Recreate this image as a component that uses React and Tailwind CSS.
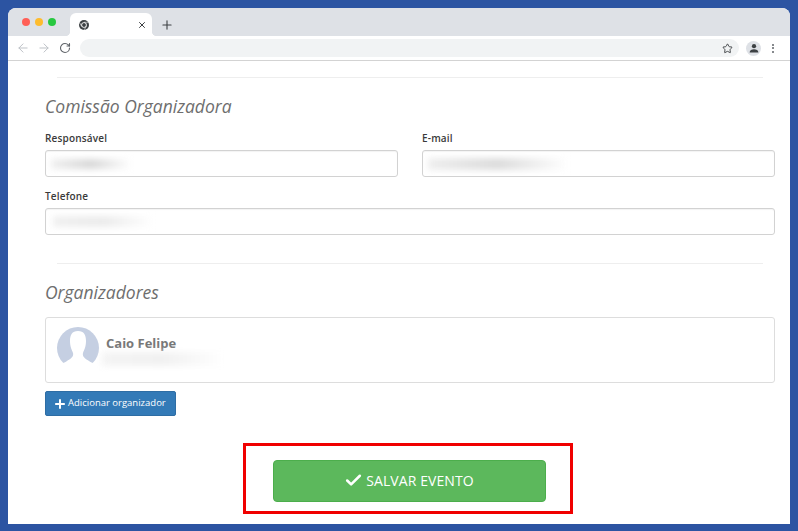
import React from "react";
import { ArrowLeft, ArrowRight, RotateCw, X, Plus, Star, Check } from "lucide-react";

const font = "font-['Open_Sans',sans-serif]";

// Smudged out personal data in the form
const Blur = ({ className }) => (
  <div className={`blur-[3px] bg-linear-to-r ${className}`}></div>
);

const Field = ({ label, blurClass, className = "" }) => (
  <div className={`flex flex-col ${className}`}>
    <label className="h-[23px] text-[10px] leading-[22px] font-semibold tracking-[0.17px] text-[#3a3a3a]">{label}</label>
    <div className="h-[27px] rounded-[3px] border border-[#d2d2d2] bg-white flex items-center pl-[5px] shadow-[inset_0_1px_1px_rgba(0,0,0,0.05)]">
      <Blur className={blurClass} />
    </div>
  </div>
);

const Divider = () => <hr className="mx-3 border-0 border-t border-[#eee]" />;

const ChromeLogo = () => (
  <svg viewBox="0 0 16 16" className="w-[10px] h-[10px]">
    <circle cx="8" cy="8" r="8" fill="#3c4043" />
    <circle cx="8" cy="8" r="4.4" fill="#fff" />
    <circle cx="8" cy="8" r="3.1" fill="#3c4043" />
    <path d="M8 3.6h7M4.2 10.2 0.9 4.2M11.8 10.2 8 16" stroke="#fff" strokeWidth="0.9" fill="none" />
  </svg>
);

const BrowserBar = () => (
  <div className="shrink-0">
    <div className="h-[28px] bg-[#dee1e6] flex pt-[5px]">
      <div className="flex items-center gap-[5px] pl-[14px] w-[62px] h-[18px]">
        <span className="w-[8px] h-[8px] rounded-full bg-[#ff5f57]"></span>
        <span className="w-[8px] h-[8px] rounded-full bg-[#febc2e]"></span>
        <span className="w-[8px] h-[8px] rounded-full bg-[#28c840]"></span>
      </div>
      <div className="relative w-[82px] h-[23px] bg-white rounded-t-[6px] flex items-center justify-between pl-[9px] pr-[5px]">
        <span className="absolute -left-[5px] bottom-0 w-[5px] h-[5px] bg-[radial-gradient(circle_at_0_0,#dee1e6_5px,#fff_5.5px)]"></span>
        <span className="absolute -right-[5px] bottom-0 w-[5px] h-[5px] bg-[radial-gradient(circle_at_100%_0,#dee1e6_5px,#fff_5.5px)]"></span>
        <ChromeLogo />
        <X className="w-[10px] h-[10px] text-[#3c4043]" strokeWidth={2.4} />
      </div>
      <div className="h-[23px] flex items-center pl-[8px]">
        <Plus className="w-[14px] h-[14px] text-[#3c4043]" strokeWidth={1.9} />
      </div>
    </div>
    <div className="h-[25px] bg-white border-b border-[#d3d3d3] flex items-center">
      <div className="w-[72px] flex items-center pl-[8px]">
        <ArrowLeft className="w-[14px] h-[14px] text-[#bdc1c6]" strokeWidth={1.7} />
        <ArrowRight className="ml-[7px] w-[14px] h-[14px] text-[#bdc1c6]" strokeWidth={1.7} />
        <RotateCw className="ml-[8px] w-[12px] h-[12px] text-[#5f6368]" strokeWidth={2.2} />
      </div>
      <div className="w-[659px] h-[18px] rounded-full bg-[#f1f3f4] flex items-center justify-end pr-[6px]">
        <Star className="w-[11px] h-[11px] text-[#3c4043]" strokeWidth={2} />
      </div>
      <div className="ml-[7px] w-[15px] h-[15px] rounded-full bg-[#dee1e6] flex items-center justify-center">
        <svg viewBox="0 0 16 16" className="w-[10px] h-[10px]">
          <circle cx="8" cy="5" r="3.4" fill="#3c4043" />
          <path d="M1 15c0-3.6 3.4-5 7-5s7 1.400 7 5z" fill="#3c4043" />
        </svg>
      </div>
      <div className="ml-[11px] flex flex-col gap-[1.5px]">
        <span className="w-[2px] h-[2px] rounded-full bg-[#5f6368]"></span>
        <span className="w-[2px] h-[2px] rounded-full bg-[#5f6368]"></span>
        <span className="w-[2px] h-[2px] rounded-full bg-[#5f6368]"></span>
      </div>
    </div>
  </div>
);

const Avatar = () => (
  <svg viewBox="0 0 42 42" className="w-[42px] h-[42px] shrink-0 mb-[4px]">
    <circle cx="21" cy="21" r="21" fill="#c5cfe2" />
    <path d="M21 4C15 4 13 8 13 14C13 20 15 23 16 26C17 30 13 32 10 34C8 35.500 6 36 3 37V43H39V37C36 36 34 35.500 32 34C29 32 25 30 26 26C27 23 29 20 29 14C29 8 27 4 21 4Z" fill="#fff" />
  </svg>
);

export default function App() {
  return (
    <div className={`w-[798px] h-[531px] overflow-hidden bg-[#2c54a2] pt-2 px-2 pb-[7px] ${font}`}>
      <div className="h-full rounded-t-[8px] overflow-hidden bg-white flex flex-col">
        <BrowserBar />
        <div className="ml-[37px] mr-[15px] pt-[16px] flex flex-col">
          <Divider />
          <h2 className="mt-[16px] h-[24px] text-[17.5px] leading-[24px] italic text-[#6e6e6e]">Comissão Organizadora</h2>
          <div className="mt-[9px] grid grid-cols-2 gap-x-[24px]">
            <Field label="Responsável" blurClass="w-[80px] h-[10px] from-[#f0f0f0] via-[#d8d8d8] to-white" />
            <Field label="E-mail" blurClass="w-[140px] h-[12px] from-[#eeeeee] via-[#dcdcdc] to-white" />
          </div>
          <Field className="mt-[8px]" label="Telefone" blurClass="w-[100px] h-[11px] ml-[2px] from-[#f0f0f0] via-[#ebebeb] to-white" />
          <div className="mt-[28px]"><Divider /></div>
          <h2 className="mt-[16px] h-[24px] text-[17.5px] leading-[24px] italic text-[#6e6e6e]">Organizadores</h2>
          <div className="mt-[13px] h-[66px] rounded-[3px] border border-[#ddd] flex items-center pl-[11px] gap-[7px]">
            <Avatar />
            <div className="flex flex-col -mt-[1px]">
              <span className="text-[13px] leading-[18px] font-bold text-[#777]">Caio Felipe</span>
              <Blur className="-ml-[4px] w-[122px] h-[14px] from-[#f4f4f4] via-[#f1f1f1] to-white" />
            </div>
          </div>
          <div className="mt-[8px]">
            <button className="w-[131px] h-[25px] rounded-[2px] bg-[#337ab7] border border-[#2e6da4] text-white flex items-center justify-start pl-[7px] gap-[1px] text-[9.5px]">
              <Plus className="w-[14px] h-[14px]" strokeWidth={3.4} />
              Adicionar organizador
            </button>
          </div>
          <div className="mt-[27px] ml-[198px] w-[330px] h-[71px] border-[3px] border-[#f00000] flex items-center justify-center">
            <button className="ml-[2px] mt-[4px] w-[273px] h-[42px] rounded-[4px] bg-[#5cb85c] border border-[#4cae4c] text-white flex items-center justify-center gap-[3px] text-[14px] tracking-[0.1px]">
              <Check className="w-[19px] h-[19px]" strokeWidth={3.2} />
              SALVAR EVENTO
            </button>
          </div>
        </div>
      </div>
    </div>
  );
}
